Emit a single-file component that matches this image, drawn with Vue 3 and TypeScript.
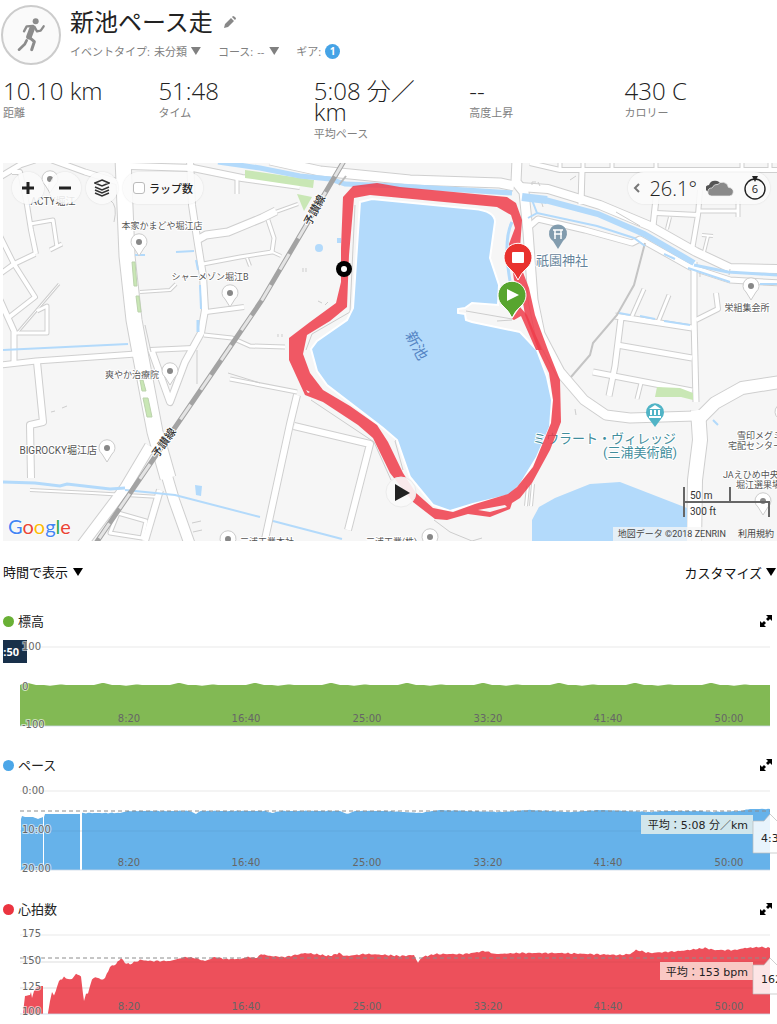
<script setup lang="ts">
import { ref } from 'vue'

type Point = [number, number]

interface Road { w: number; d: string }
interface Pin { x: number; y: number }
interface MapLabel { x: number; y: number; text: string; anchor: 'start' | 'middle' | 'end'; large?: boolean }
interface Axis { y: number; text: string }
interface Chart {
  id: string
  title: string
  dot: string
  fill: string
  areas: string[]
  grid: number[]
  axis: Axis[]
  average?: { y: number; x: number; boxY: number; h: number; text: string; bg: string }
  tip?: { top: number; bottom: number; apex: number; text: string; baseline: number }
}

const showLaps = ref(false)

const stats = [
  { value: '10.10 km', label: '距離' },
  { value: '51:48', label: 'タイム' },
  { value: '5:08 分／km', label: '平均ペース' },
  { value: '--', label: '高度上昇' },
  { value: '430 C', label: 'カロリー' },
]

const roads: Road[] = [
  { w: 5, d: 'M0 177 L20 165 L35 160' },
  { w: 5, d: 'M52 160 L85 172 L118 182' },
  { w: 4, d: 'M12 172 L20 172 L27 205 L31 230 L36 254' },
  { w: 3, d: 'M30 224 L53 220 L57 247' },
  { w: 3, d: 'M50 250 L62 244' },
  { w: 4, d: 'M0 236 L14 264 L35 297 L8 318' },
  { w: 4, d: 'M0 274 L14 264 L35 254' },
  { w: 5, d: 'M0 300 L14 331 L14 362' },
  { w: 3, d: 'M14 333 L47 333 L47 306 L37 311' },
  { w: 1, d: 'M18 332 L59 284' },
  { w: 5, d: 'M0 365 L36 361 L136 354' },
  { w: 6, d: 'M37 362 L43 422 L30 425 L31 478' },
  { w: 2, d: 'M30 490 L92 493 L160 497' },
  { w: 6, d: 'M160 490 L145 541' },
  { w: 6, d: 'M190 160 L192 205 L197 238 L203 276 L205 310 L201 333 L185 362 L170 402 L151 349' },
  { w: 4, d: 'M150 350 L193 348' },
  { w: 7, d: 'M197 240 L206 235 L228 232 L262 218 L276 211' },
  { w: 2, d: 'M270 214 L298 204' },
  { w: 3, d: 'M203 264 L240 257 L272 252 L274 238 L268 220' },
  { w: 2, d: 'M270 251 L281 256 M247 258 L250 266' },
  { w: 4, d: 'M206 312 L244 307' },
  { w: 3, d: 'M204 335 L232 338 L250 346 L285 347' },
  { w: 2, d: 'M140 292 L170 290 L176 284' },
  { w: 6, d: 'M130 166 L193 168 L242 178 L300 186' },
  { w: 3, d: 'M237 178 L237 194' },
  { w: 9, d: 'M270 160 L320 171 L410 180 L500 183 L514 186' },
  { w: 3, d: 'M230 379 L297 392' },
  { w: 6, d: 'M297 395 L290 424 L264 544' },
  { w: 6, d: 'M294 426 L370 444 L348 530' },
  { w: 9, d: 'M517 160 L516 182 L524 192 L528 232 L533 300 L540 334 L560 372 L584 400 L606 415 L630 418 L695 416' },
  { w: 4, d: 'M530 163 L560 170 L777 170' },
  { w: 3, d: 'M560 160 V170 M583 160 V170 M612 160 V170 M656 160 V170 M742 160 V170 M770 160 V170' },
  { w: 5, d: 'M582 170 L581 204' },
  { w: 5, d: 'M657 190 L653 226' },
  { w: 4, d: 'M656 213 L698 215 M700 190 L698 215 L692 250' },
  { w: 3, d: 'M700 211 L738 211 M738 201 V217' },
  { w: 2, d: 'M670 217 L667 229 M702 235 L713 236 M708 236 L704 252' },
  { w: 8, d: 'M520 187 L548 189 L600 205 L650 226 L696 252 L730 268 L780 269' },
  { w: 5, d: 'M530 226 L538 219 L585 230 L632 243 L640 239 L690 267 L730 280 L780 283' },
  { w: 5, d: 'M694 262 L694 318 L696 402' },
  { w: 4, d: 'M696 320 L718 309 L716 293' },
  { w: 5, d: 'M615 316 L692 328 M621 318 L615 366 L609 396' },
  { w: 5, d: 'M617 345 L692 358 M593 372 L692 391' },
  { w: 3, d: 'M641 383 L637 399 M644 289 L632 316 M669 295 L658 322' },
  { w: 12, d: 'M780 382 L742 388 L715 403 L698 420' },
  { w: 14, d: 'M698 410 L700 440 L695 480 L694 545' },
  { w: 2, d: 'M528 486 L526 506 M533 484 L531 506' },
  { w: 10, d: 'M150 446 L125 488 L82 545' },
  { w: 15, d: 'M123 158 L127 256 L134 320 L141 358 L155 432 L168 478' },
  { w: 10, d: 'M164 466 L174 500 L190 545' },
  { w: 3, d: 'M118 513 L146 521 L142 538 L110 533 Z' },
]

const thinLines: string[] = [
  'M197 350 V384', 'M110 200 Q118 205 114 222', 'M145 325 L151 352',
  'M311 400 L374 442 L391 480', 'M434 520 L450 532 L472 541 L482 538', 'M434 420 L395 441 L403 470',
  'M355 205 L350 312 L312 334 L306 350', 'M466 311 L512 319', 'M512 320 L497 321',
  'M51 412 L55 411 M62 408 L67 406', 'M303 268 V272 M306 268 V272', 'M278 334 V337 M282 334 V337',
  'M318 301 L322 303 M325 305 L328 302', 'M192 523 L201 521 M193 532 L202 530', 'M576 415 L575 409',
  'M532 185 V182 H536 M540 186 L538 182 M570 180 L576 176', 'M616 212 L640 226', 'M700 271 V277',
  'M730 269 L729 275', 'M540 197 L543 207', 'M228 373 L260 383',
]

const greyPins: Pin[] = [
  { x: 50, y: 179 }, { x: 139, y: 242 }, { x: 230, y: 293 }, { x: 170, y: 371 },
  { x: 107, y: 448 }, { x: 751, y: 286 }, { x: 763, y: 501 }, { x: 228, y: 539 },
  { x: 430, y: 537 }, { x: 783, y: 412 },
]

const labels: MapLabel[] = [
  { x: 53, y: 205, text: 'ACTY堀江', anchor: 'middle', large: true },
  { x: 162, y: 229, text: '本家かまどや堀江店', anchor: 'middle' },
  { x: 210, y: 280, text: 'シャーメゾン堀江B', anchor: 'middle' },
  { x: 159, y: 378, text: '爽やか治療院', anchor: 'end' },
  { x: 97, y: 454, text: 'BIGROCKY堀江店', anchor: 'end', large: true },
  { x: 747, y: 311, text: '栄組集会所', anchor: 'middle' },
  { x: 737, y: 439, text: '雪印メグミルク', anchor: 'start' },
  { x: 728, y: 449, text: '宅配センター', anchor: 'start' },
  { x: 723, y: 478, text: 'JAえひめ中央', anchor: 'start' },
  { x: 736, y: 488, text: '堀江選果場', anchor: 'start' },
  { x: 240, y: 545, text: '三浦工業本社', anchor: 'start' },
  { x: 366, y: 545, text: '三浦工業(株)', anchor: 'start' },
]

const ticks = [
  { x: 129, text: '8:20' }, { x: 246, text: '16:40' }, { x: 367, text: '25:00' },
  { x: 488, text: '33:20' }, { x: 608, text: '41:40' }, { x: 729, text: '50:00' },
]

const BASE = 95

function area(points: Point[], jitter: number): string {
  const first = points[0]
  const last = points[points.length - 1]
  let d = `M${first[0]} ${BASE}`
  for (let i = 0; i < points.length - 1; i++) {
    const [x0, y0] = points[i]
    const [x1, y1] = points[i + 1]
    const steps = Math.max(1, Math.round((x1 - x0) / 2))
    for (let s = 0; s < steps; s++) {
      const x = x0 + ((x1 - x0) * s) / steps
      const wobble = jitter * Math.sin(x * 1.7) * Math.sin(x * 0.6)
      d += ` L${x.toFixed(1)} ${(y0 + ((y1 - y0) * s) / steps + wobble).toFixed(1)}`
    }
  }
  return `${d} L${last[0]} ${last[1]} L${last[0]} ${BASE} Z`
}

function elevation(): Point[] {
  const out: Point[] = [[20, 54]]
  for (let x = 22; x <= 770; x += 2) {
    const phase = (((x - 103) % 76) + 76) % 76
    const near = Math.min(phase, 76 - phase)
    const bump = 2 * Math.exp(-(near * near) / 30)
    const dip = 0.8 * Math.exp(-((phase - 23) * (phase - 23)) / 18)
    out.push([x, 54 - bump + dip - 0.5 * Math.exp(-((phase - 34) * (phase - 34)) / 20)])
  }
  return out
}

const charts: Chart[] = [
  {
    id: 'elevation', title: '標高', dot: '#69b035', fill: '#82b954',
    areas: [area(elevation(), 0)],
    grid: [16],
    axis: [{ y: 19, text: '100' }, { y: 59, text: '0' }, { y: 97, text: '-100' }],
  },
  {
    id: 'pace', title: 'ペース', dot: '#4ba6e8', fill: '#66b2ea',
    areas: [
      area([[21, 44], [22, 41], [25, 42], [33, 42], [38, 44], [43, 42]], 0),
      area([[44, 42], [45, 39], [80, 39]], 0),
      area([[82, 38], [120, 38], [128, 36], [190, 36], [196, 39], [200, 36], [265, 36], [272, 38], [280, 36],
        [340, 36], [347, 39], [355, 36], [387, 36], [420, 38], [440, 35], [500, 37], [530, 35], [570, 37],
        [600, 35], [650, 37], [665, 36], [700, 36], [712, 37], [740, 36], [750, 34], [770, 34]], 0.4),
    ],
    grid: [16, 56],
    axis: [{ y: 19, text: '0:00' }, { y: 58, text: '10:00' }, { y: 97, text: '20:00' }],
    average: { y: 36, x: 641, boxY: 40, h: 19, text: '平均：5:08 分／km', bg: '#d1e6ec' },
    tip: { top: 46, bottom: 78, apex: 39, text: '4:38', baseline: 67 },
  },
  {
    id: 'heart', title: '心拍数', dot: '#eb3440', fill: '#ed505b',
    areas: [
      area([[23, 94], [25, 77], [30, 76], [31, 73], [32, 79], [34, 72], [36, 69], [41, 67], [43, 67]], 0),
      area([[48, 94], [50, 82], [52, 73], [54, 77], [59, 62], [62, 60], [64, 57], [66, 60], [72, 60], [76, 55],
        [81, 57], [83, 75], [84, 82], [86, 74], [88, 75], [92, 60], [97, 58], [101, 61], [105, 59], [110, 48],
        [116, 45], [121, 39], [125, 44], [130, 45], [140, 41], [150, 42], [170, 42], [185, 38], [195, 39],
        [205, 42], [215, 38], [225, 40], [240, 40], [248, 38], [257, 39], [261, 35], [270, 37], [285, 38],
        [295, 36], [305, 34], [315, 35], [330, 37], [339, 34], [345, 37], [365, 35], [387, 36], [400, 37],
        [414, 36], [418, 44], [422, 38], [435, 35], [465, 35], [485, 32], [495, 35], [520, 34], [560, 34],
        [590, 35], [620, 36], [630, 35], [636, 31], [650, 34], [680, 32], [705, 29], [715, 31], [735, 31],
        [745, 29], [760, 28], [770, 29]], 0.8),
    ],
    grid: [16, 43, 69],
    axis: [{ y: 18, text: '175' }, { y: 45, text: '150' }, { y: 71, text: '125' }, { y: 96, text: '100' }],
    average: { y: 39, x: 660, boxY: 43, h: 18, text: '平均：153 bpm', bg: '#f9c8c4' },
    tip: { top: 46, bottom: 75, apex: 39, text: '162', baseline: 64 },
  },
]
</script>

<template>
  <main class="page">
    <header class="head">
      <div class="avatar">
        <svg viewBox="3 15 180 180" aria-hidden="true">
          <g fill="none" stroke="#8c8c8c" stroke-linecap="round" stroke-linejoin="round">
            <path d="M96 86 L87 110" stroke-width="17" />
            <path d="M99 78 L80 79 L72 94" stroke-width="7" />
            <path d="M103 80 L111 94 L122 92 L131 79" stroke-width="7" />
            <path d="M88 112 L103 125 L95 149" stroke-width="9" />
            <path d="M80 121 L74 133 L57 149" stroke-width="8" />
          </g>
          <circle cx="107" cy="64" r="9" fill="#8c8c8c" />
        </svg>
      </div>
      <div class="head-text">
        <div class="title-row">
          <h1>新池ペース走</h1>
          <button class="plain" type="button" aria-label="名前を編集">
            <svg width="12" height="12" viewBox="0 0 12 12" fill="#888">
              <path d="M0 12 L1 8 L7 2 L10 5 L4 11 Z M8 1 L9 0 Q10 0 12 2 Q12 3 11 4 Z" />
            </svg>
          </button>
        </div>
        <div class="meta">
          <label>イベントタイプ: <select><option>未分類</option></select><i class="caret" /></label>
          <label>コース: <select><option>--</option></select><i class="caret" /></label>
          <span class="gear">ギア: <button type="button" class="badge">1</button></span>
        </div>
      </div>
    </header>

    <dl class="stats">
      <div v-for="s in stats" :key="s.label" class="stat">
        <dd>{{ s.value }}</dd>
        <dt>{{ s.label }}</dt>
      </div>
    </dl>

    <section class="map" aria-label="地図">
      <svg class="canvas" viewBox="3 163 774 378" preserveAspectRatio="xMidYMid slice">
        <rect x="3" y="163" width="774" height="378" fill="#f6f6f6" />
        <g fill="none" stroke="#cfcfcf" stroke-linejoin="round">
          <path v-for="(r, i) in roads" :key="i" :d="r.d" :stroke-width="r.w + 2" />
        </g>
        <g fill="none" stroke="#fff" stroke-linejoin="round">
          <path v-for="(r, i) in roads" :key="i" :d="r.d" :stroke-width="r.w" />
        </g>
        <g fill="none" stroke="#cdcdcd" stroke-width="1">
          <path v-for="(d, i) in thinLines" :key="i" :d="d" />
          <path d="M645 243 L634 285 L617 315 L593 343 L590 355 L571 377" stroke="#c4c4c4" stroke-width="2" />
        </g>
        <g fill="#c9e7b5" stroke="#bcd3ad" stroke-width="1">
          <path d="M132 262 L135 262 L137 286 L134 286 Z" />
          <path d="M136 296 L139 296 L141 312 L138 312 Z" />
          <path d="M140 380 L143 380 L146 391 L142 391 Z" />
          <path d="M143 398 L148 398 L152 417 L147 417 Z" />
        </g>
        <g fill="#c9e7b5">
          <path d="M245 170 L314 180 L313 188 L245 178 Z" />
          <path d="M297 194 L312 197 L304 211 Z" />
          <path d="M657 387 L680 388 L693 393 L693 400 L681 397 L655 397 Z" />
        </g>
        <g fill="none" stroke="#b3dafb">
          <path d="M3 350 L128 344" stroke-width="2" />
          <path d="M3 482 L35 483 L60 486 L67 484 L110 489 L125 488" stroke-width="3" />
          <path d="M125 490 L175 495 L260 517 M273 521 L342 539" stroke-width="2" />
          <path d="M218 162 L260 168 L300 176 L330 179 L345 184 L400 186 L512 193" stroke-width="5" />
          <path d="M176 252 L194 251 M135 255 H145 M196 260 L198 270 M200 285 L201 309" stroke-width="2" />
          <path d="M198 320 V332" stroke-width="3" />
          <path d="M522 197 L547 200" stroke-width="8" />
          <path d="M545 200 L598 214 L644 234 L694 263" stroke-width="6" />
          <path d="M694 265 L728 272 L777 275" stroke-width="3" />
          <path d="M532 200 L537 213 L528 218 M537 213 L597 226 L634 238 L645 246 M664 254 L675 259 M688 268 L730 282 M760 284 H777" stroke-width="2" />
          <path d="M619 313 L630 315 M640 316 L655 319 M664 321 L690 325 M713 420 L718 425" stroke-width="2" />
          <path d="M512 222 Q503 240 510 281" stroke-width="3" />
        </g>
        <g fill="#b3dafb">
          <path d="M195 485 L202 486 L201 496 L196 495 Z" />
          <circle cx="319" cy="248" r="4" />
          <rect x="337" y="238" width="4" height="5" />
        </g>
        <path d="M360 202 L372 199 L474 209 Q495 211 495 222 L490 258 L499 285 L498 305 L472 303 L465 308 L458 309 L458 313 L465 314 L466 320 L472 322 L520 332 L537 350 L547 377 L552 400 L550 427 L537 457 L520 485 L510 495 L473 504 L450 511 L433 505 L410 477 L397 440 L383 428 L327 385 L317 371 L311 349 L317 341 L347 320 L353 308 Z" fill="#b3dafb" stroke="#fff" stroke-width="2" />
        <path d="M532 543 L532 520 L539 507 L555 498 L590 484 L620 482 L687 508 V543 Z" fill="#b3dafb" />
        <path d="M344 161 L262 300 L228 350 L96 543" fill="none" stroke="#a3a3a3" stroke-width="5" />
        <path d="M344 161 L262 300 L228 350 L96 543" fill="none" stroke="#e4e4e4" stroke-width="3" stroke-dasharray="18 18" />
        <path d="M339 185 L346 176" stroke="#bbb" stroke-width="2" />

        <g class="place">
          <g v-for="(p, i) in greyPins" :key="i">
            <path :d="`M${p.x} ${p.y + 14} l-5 -8 a8 8 0 1 1 10 0 Z`" fill="#fff" stroke="#ccc" />
            <circle :cx="p.x" :cy="p.y" r="3" fill="#888" />
          </g>
          <text v-for="l in labels" :key="l.text" :class="{ large: l.large }" :x="l.x" :y="l.y" :text-anchor="l.anchor">{{ l.text }}</text>
        </g>
        <g class="rail">
          <text transform="translate(318 212) rotate(-62)" text-anchor="middle">予讃線</text>
          <text transform="translate(167 445) rotate(-55)" text-anchor="middle">予讃線</text>
        </g>
        <text class="lake" transform="translate(412 348) rotate(62)" text-anchor="middle">新池</text>

        <path d="M558 249 l-5 -8 a9 9 0 1 1 10 0 Z" fill="#829cae" />
        <path d="M553 230 H563 M554 234 H562 M555 230 V239 M561 230 V239" stroke="#fff" stroke-width="1.5" fill="none" />
        <text class="shrine" x="562" y="265" text-anchor="middle">祇園神社</text>
        <path d="M655 427 l-6 -8 a9 9 0 1 1 12 0 Z" fill="#51b4c6" />
        <path d="M649 409 L655 405 L661 409 Z M650 410 H652 V415 H650 Z M654 410 H656 V415 H654 Z M658 410 H660 V415 H658 Z M649 416 H661 V418 H649 Z" fill="#fff" />
        <g class="museum">
          <text x="676" y="443" text-anchor="end">ミウラート・ヴィレッジ</text>
          <text x="677" y="457" text-anchor="end">(三浦美術館)</text>
        </g>

        <g fill="#ee3c4a" fill-opacity="0.85" fill-rule="evenodd">
          <path d="M343 197 L353 186 L377 183 L400 187 L507 197 L516 203 L522 220 L519 262 L529 288 L535 315 L548 350 L560 380 L561 422 L550 450 L532 483 L520 498 L512 503 L510 509 L490 517 L468 514 L447 520 L435 519 L413 502 L390 473 L373 438 L358 425 L323 402 L305 395 L289 360 L289 338 L310 322 L336 303 L341 282 L341 248 Z
            M354 198 L370 195 L497 207 L511 215 L515 228 L509 244 L514 280 L521 290 L525 315 L539 352 L549 373 L553 400 L551 423 L533 467 L517 487 L508 494 L475 504 L453 512 L433 508 L416 493 L403 473 L388 442 L377 425 L350 406 L323 390 L310 373 L303 354 L307 335 L330 321 L347 307 L349 255 Z
            M478 510 L505 505 L507 507 L490 512 Z M306 390 L310 392 L308 393 Z" />
          <path d="M512 319 L520 307 L527 315 L542 350 L536 350 L521 316 L514 320 Z" />
        </g>
        <circle cx="344" cy="269" r="8" fill="#000" />
        <circle cx="344" cy="269" r="3" fill="#fff" />
        <g stroke="#fff" stroke-width="1">
          <path d="M518 280 Q515 273 509 268 A14 14 0 1 1 527 268 Q521 273 518 280 Z" fill="#e9322e" />
          <path d="M512 318 Q509 311 503 306 A14 14 0 1 1 521 306 Q515 311 512 318 Z" fill="#58a52f" />
        </g>
        <rect x="512" y="252" width="12" height="11" rx="1" fill="#fff" />
        <path d="M507 289 L519 295 L507 301 Z" fill="#fff" />
        <circle cx="401" cy="492" r="15" fill="#fafafa" fill-opacity="0.9" stroke="#ececec" />
        <path d="M395 484 L410 493 L395 501 Z" fill="#222" />
        <g class="scale">
          <path d="M684 487 V517 M684 502 H770 M730 487 V502 M769 502 V517" stroke="#666" stroke-width="2" />
          <text x="690" y="499">50 m</text>
          <text x="690" y="515">300 ft</text>
        </g>
        <text class="google" x="8" y="534"><tspan fill="#4285f4">G</tspan><tspan fill="#ea4335">o</tspan><tspan fill="#fbbc05">o</tspan><tspan fill="#4285f4">g</tspan><tspan fill="#34a853">l</tspan><tspan fill="#ea4335">e</tspan></text>
      </svg>

      <div class="controls">
        <button class="round" type="button" aria-label="拡大">
          <svg width="14" height="14" viewBox="0 0 14 14" stroke="#222" stroke-width="3"><path d="M1 7 H13 M7 1 V13" /></svg>
        </button>
        <button class="round" type="button" aria-label="縮小">
          <svg width="14" height="14" viewBox="0 0 14 14" stroke="#222" stroke-width="3"><path d="M1 7 H13" /></svg>
        </button>
        <button class="round" type="button" aria-label="レイヤー">
          <svg width="16" height="18" viewBox="0 0 16 18" fill="none" stroke="#333" stroke-width="1.5">
            <path d="M8 1 L15 4 L8 7 L1 4 Z M1 8 L8 11 L15 8 M1 11 L8 14 L15 11 M1 14 L8 17 L15 14" />
          </svg>
        </button>
        <label class="laps"><input v-model="showLaps" type="checkbox">ラップ数</label>
      </div>

      <div class="weather">
        <button class="plain" type="button" aria-label="閉じる">
          <svg width="7" height="10" viewBox="0 0 7 10" fill="none" stroke="#777" stroke-width="2"><path d="M6 1 L2 5 L6 9" /></svg>
        </button>
        <span class="temp">26.1°</span>
        <svg width="28" height="17" viewBox="564 73 84 51" aria-label="曇り">
          <path d="M573 108 A10 10 0 0 1 573 88 Q577 75 590 75 Q604 74 608 86 Q590 84 583 99 Z" fill="#555" />
          <path d="M581 121 A12 12 0 0 1 582 97 Q588 84 600 86 Q606 78 617 80 Q630 83 631 95 Q646 97 646 109 Q645 121 634 121 Z" fill="#8a8a8a" stroke="#f4f4f4" stroke-width="2" />
        </svg>
        <svg width="24" height="26" viewBox="0 0 24 26" aria-label="風">
          <circle cx="12" cy="14" r="10" fill="none" stroke="#222" stroke-width="1.4" />
          <path d="M9 1 H15 L12 7 Z" fill="#222" />
          <text x="12" y="18" text-anchor="middle">6</text>
        </svg>
      </div>

      <footer class="credit"><span>地図データ ©2018 ZENRIN</span><a href="#terms">利用規約</a></footer>
    </section>

    <div class="toolbar">
      <label><select aria-label="表示方法"><option>時間で表示</option></select><i class="caret dark" /></label>
      <button class="plain" type="button">カスタマイズ<i class="caret dark" /></button>
    </div>

    <section v-for="c in charts" :key="c.id" class="panel">
      <div class="panel-head">
        <span class="dot" :style="{ background: c.dot }" />
        <h2>{{ c.title }}</h2>
        <button class="plain" type="button" :aria-label="`${c.title}を拡大`">
          <svg width="12" height="12" viewBox="0 0 12 12" fill="#000">
            <path d="M6 0 H12 V6 L10 4 L8 6 L6 4 L8 2 Z M0 6 L2 8 L4 6 L6 8 L4 10 L6 12 H0 Z" />
          </svg>
        </button>
      </div>
      <svg class="plot" viewBox="0 0 777 104">
        <path v-for="y in c.grid" :key="y" :d="`M20 ${y} H770`" stroke="#e9e9e9" stroke-width="1" />
        <path v-for="(d, i) in c.areas" :key="i" :d="d" :fill="c.fill" />
        <path v-for="y in c.grid.slice(1)" :key="'o' + y" :d="`M20 ${y} H770`" stroke="#000" stroke-opacity="0.05" />
        <path d="M20 95 H770" stroke="#c9d6e6" stroke-opacity="0.8" />
        <path v-if="c.average" :d="`M20 ${c.average.y} H770`" stroke="#8c8c8c" stroke-width="1" stroke-dasharray="4 3" />
        <g v-if="c.id === 'elevation'">
          <rect x="3" y="9" width="24" height="23" fill="#18304a" />
          <svg x="3" y="9" width="24" height="23"><text class="cursor" x="16" y="16" text-anchor="end">:50</text></svg>
        </g>
        <g class="axis">
          <text v-for="a in c.axis" :key="a.text" class="halo" x="22" :y="a.y">{{ a.text }}</text>
          <text v-for="t in ticks" :key="t.text" :x="t.x" y="91" text-anchor="middle">{{ t.text }}</text>
        </g>
        <g v-if="c.average && c.tip" class="note">
          <rect :x="c.average.x" :y="c.average.boxY" :width="753 - c.average.x" :height="c.average.h" :fill="c.average.bg" />
          <text x="748" :y="c.average.boxY + 14" text-anchor="end">{{ c.average.text }}</text>
          <path :d="`M753 ${c.tip.top} H764 L770 ${c.tip.apex} L777 ${c.tip.top} H790 V${c.tip.bottom} H753 Z`" fill="#fff" fill-opacity="0.85" stroke="#bbb" stroke-opacity="0.7" />
          <text x="761" :y="c.tip.baseline">{{ c.tip.text }}</text>
        </g>
      </svg>
    </section>
  </main>
</template>

<style>
html, body { margin: 0; background: #fff; }
body { overflow-x: hidden; }
</style>

<style scoped>
.page { font-family: "Open Sans", "Noto Sans CJK JP", sans-serif; color: #222; overflow: hidden; }
button, select, input { font: inherit; color: inherit; margin: 0; padding: 0; border: 0; background: none; }
select { appearance: none; outline: none; }
.plain { display: inline-flex; align-items: center; cursor: pointer; }
.head { display: flex; gap: 9px; padding: 5px 1px 0; }
.avatar { box-sizing: border-box; width: 60px; height: 60px; border: 2px solid #ccc; border-radius: 50%; background: #fafafa; }
.avatar svg { display: block; width: 60px; height: 60px; margin: -2px; }
.title-row { display: flex; align-items: center; gap: 11px; height: 34px; }
h1 { margin: 0; font-size: 24px; font-weight: 400; line-height: 34px; }
.meta { display: flex; gap: 17px; align-items: center; height: 24px; font-size: 11px; color: #808080; }
.meta label, .gear { display: flex; align-items: center; gap: 4px; }
.caret { display: inline-block; width: 10px; height: 8px; background: #808080; clip-path: polygon(0 0, 100% 0, 50% 100%); }
.caret.dark { background: #000; margin-left: 4px; }
.badge { width: 15px; height: 15px; border-radius: 50%; background: #45a3e6; color: #fff; font-size: 10px; font-weight: 700; line-height: 15px; text-align: center; }
.stats { display: grid; grid-template-columns: repeat(5, 1fr); margin: 15px 0 21px; }
.stat { display: flex; flex-direction: column; gap: 4px; padding: 0 28px 0 3px; }
.stat dd { margin: 0; font-size: 24px; font-weight: 300; line-height: 21px; }
.stat dt { font-size: 11px; line-height: 16px; color: #808080; }
.map { position: relative; margin-left: 3px; overflow: hidden; }
.canvas { display: block; width: 100%; height: auto; }
.canvas text { font-family: Roboto, "Noto Sans CJK JP", sans-serif; paint-order: stroke; stroke: #fff; stroke-width: 2px; stroke-linejoin: round; }
.place text { font-size: 9px; fill: #555; }
.place .large { font-size: 10px; }
.rail text { font-size: 11px; font-weight: 500; fill: #333; }
.canvas .lake { font-size: 15px; fill: #5585c4; stroke: none; }
.shrine { font-size: 13px; fill: #65839a; }
.museum text { font-size: 13px; fill: #418d9c; }
.scale text { font-size: 10px; fill: #333; stroke: none; }
.canvas .google { font-family: Lato, sans-serif; font-size: 20px; stroke-width: 1px; }
.controls { position: absolute; left: 9px; top: 9px; display: flex; gap: 5px; }
.round, .laps { height: 32px; border-radius: 16px; background: rgba(250, 250, 250, 0.88); box-shadow: 0 0 2px rgba(0, 0, 0, 0.12); }
.round { width: 32px; display: flex; align-items: center; justify-content: center; }
.laps { display: flex; align-items: center; gap: 4px; padding: 0 10px; font-size: 11px; font-weight: 500; }
.laps input { appearance: none; width: 12px; height: 12px; border: 1px solid #bbb; border-radius: 3px; background: #fff; box-sizing: border-box; }
.laps input:checked { background: #45a3e6; }
.weather { position: absolute; right: 7px; top: 9px; height: 32px; display: flex; align-items: center; padding: 0 3px 0 5px; gap: 9px; border-radius: 16px; background: rgba(250, 250, 250, 0.88); box-shadow: 0 0 2px rgba(0, 0, 0, 0.12); }
.temp { font-size: 20px; font-weight: 300; }
.weather text { font-size: 11px; fill: #222; }
.credit { position: absolute; right: 0; bottom: 0; display: flex; gap: 12px; padding: 0 3px 0 5px; background: rgba(245, 245, 245, 0.75); font-family: Roboto, "Noto Sans CJK JP", sans-serif; font-size: 9px; line-height: 14px; color: #444; }
.credit a { color: inherit; text-decoration: none; }
.toolbar { display: flex; justify-content: space-between; align-items: center; height: 20px; margin: 21px 1px 29px 3px; font-size: 13px; color: #111; }
.toolbar label { display: flex; align-items: center; }
.panel { margin-bottom: 20px; }
.panel:last-child { margin-bottom: 0; }
.panel-head { display: flex; align-items: center; height: 20px; padding: 0 5px 0 3px; gap: 4px; }
.panel-head button { margin-left: auto; }
.dot { width: 11px; height: 11px; border-radius: 50%; }
h2 { margin: 0; font-size: 13px; font-weight: 400; line-height: 20px; }
.plot { display: block; width: 100%; height: auto; overflow: hidden; font-family: "DejaVu Sans", "Noto Sans CJK JP", sans-serif; }
.axis text { font-size: 10px; fill: #666; }
.axis .halo { paint-order: stroke; stroke: #fff; stroke-opacity: 0.6; stroke-width: 2px; }
.cursor { font-family: "Open Sans", sans-serif; font-size: 11px; font-weight: 700; fill: #fff; }
.note text { font-size: 11px; fill: #222; }
</style>
